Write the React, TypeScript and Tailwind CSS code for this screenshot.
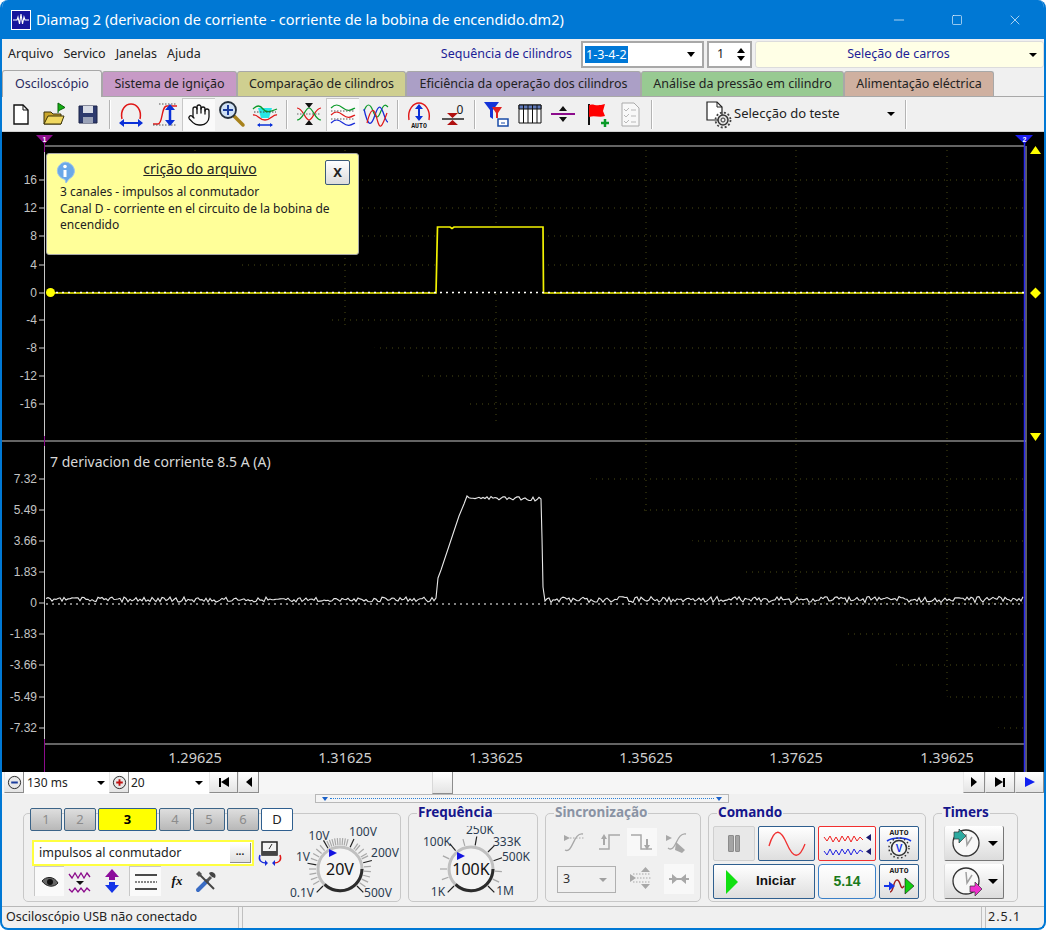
import type { ReactNode } from "react";
import { Hand, Minus, Square, X } from "lucide-react";

const tabs = [
  { label: "Sistema de ignição", w: "w-[135px]", bg: "bg-[#c79ac6]" },
  { label: "Comparação de cilindros", w: "w-[169px]", bg: "bg-[#cfcf90]" },
  { label: "Eficiência da operação dos cilindros", w: "w-[235px]", bg: "bg-[#ab9fc6]" },
  { label: "Análise da pressão em cilindro", w: "w-[203px]", bg: "bg-[#98ca92]" },
  { label: "Alimentação eléctrica", w: "w-[150px]", bg: "bg-[#cfb0a0]" },
];

const xTicks = [
  { x: 195, label: "1.29625" },
  { x: 345, label: "1.31625" },
  { x: 496, label: "1.33625" },
  { x: 646, label: "1.35625" },
  { x: 796, label: "1.37625" },
  { x: 947, label: "1.39625" },
];
const topY = [
  { y: 180, label: "16" },
  { y: 208, label: "12" },
  { y: 236, label: "8" },
  { y: 265, label: "4" },
  { y: 293, label: "0" },
  { y: 320, label: "-4" },
  { y: 348, label: "-8" },
  { y: 376, label: "-12" },
  { y: 404, label: "-16" },
];
const bottomY = [
  { y: 479, label: "7.32" },
  { y: 510, label: "5.49" },
  { y: 541, label: "3.66" },
  { y: 572, label: "1.83" },
  { y: 603, label: "0" },
  { y: 634, label: "-1.83" },
  { y: 665, label: "-3.66" },
  { y: 697, label: "-5.49" },
  { y: 728, label: "-7.32" },
];

// deterministic noise for the current trace
function noise(i: number) {
  const v = Math.sin(i * 12.9898) * 43758.5453;
  return v - Math.floor(v) - 0.5;
}

function currentTrace() {
  const pts: string[] = [];
  for (let x = 46; x < 436; x += 2) pts.push(`${x},${(599.5 + noise(x) * 5).toFixed(1)}`);
  pts.push("436,598", "438,578", "441,570", "447,552", "453,534", "459,516", "464,504", "467,496");
  for (let x = 469; x < 541; x += 2) pts.push(`${x},${(497 + (x - 469) * 0.03 + noise(x) * 4).toFixed(1)}`);
  pts.push("541,499", "542,538", "543,587", "545,601");
  for (let x = 547; x < 1024; x += 2) pts.push(`${x},${(599.5 + noise(x) * 6).toFixed(1)}`);
  return pts.join(" ");
}

function Ic({ size = 30, view = "0 0 30 30", children }: { size?: number; view?: string; children: ReactNode }) {
  return (
    <svg width={size} height={size} viewBox={view} fill="none" className="block shrink-0">
      {children}
    </svg>
  );
}

const Sep = () => <div className="w-[2px] h-[29px] mx-[4px] border-l border-[#b4b4b4] bg-white shrink-0" />;

function TB({ pressed, children }: { pressed?: boolean; children: ReactNode }) {
  return (
    <div
      className={`w-[33.5px] h-[33px] flex items-center justify-center shrink-0 ${
        pressed ? "bg-[#fafafa] border-t border-l border-[#c8c8c8]" : ""
      }`}
    >
      {children}
    </div>
  );
}

const Caret = ({ className = "" }: { className?: string }) => (
  <span className={`w-0 h-0 border-x-[4px] border-x-transparent border-t-[4px] border-t-black ${className}`} />
);

function Toolbar() {
  return (
    <div className="h-[35px] flex items-center pl-[2px] bg-[#f0f0f0] border-b border-[#d0d0d0]">
      <TB>
        <Ic>
          <path d="M8 6h9l5 5v14H8z" fill="#fff" stroke="#111" strokeWidth="1.4" />
          <path d="M17 6v5h5" stroke="#111" />
        </Ic>
      </TB>
      <TB>
        <Ic>
          <path d="M5 25V13h7l2 2h8v10z" fill="#c9a52c" stroke="#3a3208" />
          <path d="M5 25l4-8h16l-3 8z" fill="#f0d860" stroke="#3a3208" />
          <path d="M19 14V4l7 4.500-6 3" fill="#14b014" stroke="#0a600a" />
        </Ic>
      </TB>
      <TB>
        <Ic>
          <path d="M6 7h18v17H6z" fill="#2d3a6e" stroke="#1c2448" />
          <path d="M10 7h10v7H10z" fill="#d8dce6" />
          <path d="M10 18h10v6H10z" fill="#9aa2b8" />
        </Ic>
      </TB>
      <Sep />
      <TB>
        <Ic>
          <path d="M6 20C4 10 10 5 15 5s11 5 9 15" stroke="#e01818" strokeWidth="1.5" />
          <path d="M5 24h20" stroke="#0a30d8" strokeWidth="2" />
          <path d="M3 24l5-4v8zM27 24l-5-4v8z" fill="#0a30d8" />
        </Ic>
      </TB>
      <TB>
        <Ic>
          <path d="M3 25h5c5 0 3-18 9-18h10" stroke="#e01818" strokeWidth="1.4" />
          <path d="M9 5h18M3 26h24" stroke="#555" strokeDasharray="1.500 1.500" />
          <path d="M20 9v14" stroke="#0a30d8" strokeWidth="2.500" />
          <path d="M20 5l5 6H15zM20 27l5-6H15z" fill="#0a30d8" />
        </Ic>
      </TB>
      <TB pressed>
        <Hand size={24} strokeWidth={1.3} color="#111" />
      </TB>
      <TB>
        <Ic>
          <path d="M17 17l9 9" stroke="#a8821c" strokeWidth="3.500" strokeLinecap="round" />
          <circle cx="11" cy="11" r="8" fill="#cfe0f4" stroke="#26303c" strokeWidth="1.8" />
          <path d="M11 6v10M6 11h10" stroke="#1a3c9c" strokeWidth="2" />
        </Ic>
      </TB>
      <TB>
        <Ic>
          <path d="M8 9h14l-3 10h-8z" fill="#29e6e6" />
          <path d="M3 10c4-4 7-4 10 0s7 3 14 0" stroke="#0a9a28" strokeWidth="1.3" />
          <path d="M3 16c5-1 6 5 12 5s8-6 12-5" stroke="#e01818" strokeWidth="1.3" />
          <path d="M4 13h22" stroke="#444" strokeDasharray="1.500 1.500" />
          <path d="M8 26h14" stroke="#0a30d8" strokeWidth="1.5" />
          <path d="M7 26l3-2v4zM23 26l-3-2v4z" fill="#0a30d8" />
        </Ic>
      </TB>
      <Sep />
      <TB>
        <Ic>
          <path d="M3 9c6 0 8 12 12 12s6-12 12-12" stroke="#e01818" strokeWidth="1.2" />
          <path d="M3 21c6 0 8-12 12-12s6 12 12 12" stroke="#0a9a28" strokeWidth="1.2" />
          <path d="M3 15h24" stroke="#666" strokeDasharray="1.500 1.500" />
          <path d="M11 4h8l-4 5zM11 26h8l-4-5z" fill="#111" />
        </Ic>
      </TB>
      <TB pressed>
        <Ic>
          <path d="M3 8c4-4 7-4 12 0s8 2 12 0" stroke="#0a9a28" strokeWidth="1.2" />
          <path d="M3 15c4-4 7-4 12 0s8 2 12 0" stroke="#e01818" strokeWidth="1.2" />
          <path d="M3 23c4-4 7-4 12 0s8 2 12 0" stroke="#1a2cd8" strokeWidth="1.2" />
          <path d="M3 11h24M3 19h24" stroke="#555" strokeDasharray="1.500 1.500" />
        </Ic>
      </TB>
      <TB>
        <Ic>
          <path d="M3 12c3-8 6-8 9 0s5 8 8 0 5-6 7-4" stroke="#0a9a28" strokeWidth="1.200" />
          <path d="M3 10c4 18 7 18 11 6s6-8 8-3 3 10 5 10" stroke="#1a2cd8" strokeWidth="1.300" />
          <path d="M6 24c4-16 7-16 10-4s5 8 10-6" stroke="#e01818" strokeWidth="1.200" />
        </Ic>
      </TB>
      <Sep />
      <TB>
        <Ic>
          <path d="M5 21C3 10 10 4 15 4s12 6 10 17" stroke="#e01818" strokeWidth="1.400" />
          <path d="M15 8v11" stroke="#0a30d8" strokeWidth="2" />
          <path d="M15 5l4 5h-8zM15 22l4-5h-8z" fill="#0a30d8" />
          <text x="15" y="28.500" textAnchor="middle" fontSize="6.500" fontWeight="700" fill="#111" fontFamily="Liberation Mono, monospace">AUTO</text>
        </Ic>
      </TB>
      <TB>
        <Ic>
          <path d="M9 14h11l-5.500 5zM9 26h11l-5.500-5z" fill="#b01010" />
          <path d="M4 20h22" stroke="#222" strokeWidth="1.500" />
          <text x="22" y="15" textAnchor="middle" fontSize="12" fill="#222" fontFamily="Noto Sans, sans-serif">0</text>
        </Ic>
      </TB>
      <Sep />
      <TB>
        <Ic>
          <path d="M3 3h15l-6 8v9l-3-2v-7z" fill="#1434d8" />
          <path d="M11 8h10l-4 6v5h-2v-5z" fill="#e02020" />
          <path d="M17 20h10v7H17z" fill="#fff" stroke="#1a4ca8" strokeWidth="1.500" />
          <path d="M20 24h4" stroke="#1a4ca8" />
        </Ic>
      </TB>
      <TB>
        <Ic>
          <path d="M4 6h22v18H4z" fill="#fff" stroke="#111" />
          <path d="M4 6h22v4H4z" fill="#5f78b8" stroke="#111" />
          <path d="M8.500 6v18M13 6v18M17.500 6v18M22 6v18" stroke="#111" />
        </Ic>
      </TB>
      <TB>
        <Ic>
          <path d="M3 15h24" stroke="#8c0c8c" strokeWidth="2" />
          <path d="M15 7l4 5h-8zM15 23l4-5h-8z" fill="#111" />
        </Ic>
      </TB>
      <TB>
        <Ic>
          <path d="M7 5v21" stroke="#111" strokeWidth="2" />
          <path d="M7 6c5-2 6 2 16-1l-2 7 2 5c-6 2-10-1-16 1z" fill="#f00" />
          <path d="M19 24h8M23 20v8" stroke="#0a9a28" strokeWidth="2.500" />
        </Ic>
      </TB>
      <TB>
        <Ic>
          <path d="M7 4h12l5 5v18H7z" fill="#f8f8f8" stroke="#aaa" />
          <path d="M9 10l2 2 3-3M9 16l2 2 3-3M9 22l2 2 3-3M16 11h5M16 17h5M16 23h5" stroke="#b8b8b8" />
        </Ic>
      </TB>
      <Sep />
      <div className="w-[198px] ml-[46px] flex items-center shrink-0">
        <Ic size={30}>
          <path d="M4 3h10l5 5v13H4z" fill="#fff" stroke="#222" strokeWidth="1.200" />
          <path d="M14 3v5h5" stroke="#222" />
          <circle cx="20" cy="21" r="5" fill="#ddd" stroke="#333" strokeWidth="1.500" />
          <circle cx="20" cy="21" r="7.500" stroke="#444" strokeWidth="1.800" strokeDasharray="2 2" />
          <circle cx="20" cy="21" r="2" fill="#f0f0f0" stroke="#333" />
        </Ic>
        <span className="ml-[1px] text-[13px] text-[#222]">Selecção do teste</span>
        <Caret className="ml-auto mr-[6px]" />
      </div>
      <Sep />
    </div>
  );
}

function Scope() {
  const vx = xTicks.map((t) => t.x);
  return (
    <div className="relative h-[640px] bg-black">
      <svg viewBox="2 132 1042 640" width={1042} height={640} className="block">
        {[...topY, ...bottomY].map((t) => (
          <g key={t.y}>
            <path d={`M50 ${t.y}H1024`} stroke="#4a4a14" strokeDasharray="1 5" />
            <path d={`M39 ${t.y}H44`} stroke="#d0d0d0" />
            <text x="37" y={t.y + 4} textAnchor="end" fontSize="12" fill="#c4c4c4" fontFamily="Liberation Sans, sans-serif">
              {t.label}
            </text>
          </g>
        ))}
        {vx.map((x) => (
          <path key={x} d={`M${x} 150V740`} stroke="#4a4a14" strokeDasharray="1 5" />
        ))}
        {xTicks.map((t) => (
          <text key={t.x} x={t.x} y="763" textAnchor="middle" fontSize="14.500" fill="#cfcfcf" fontFamily="Noto Sans, sans-serif">
            {t.label}
          </text>
        ))}

        <path d="M44.500 146H1025M44.500 146V744H1025M2 441H1026" stroke="#c8c8c8" />
        <path d="M44.500 136V152M44.500 436V446M44.500 739V772" stroke="#8c0c8c" />
        <path d="M36 135H53L44.500 144z" fill="#8c0c8c" />
        <text x="44.500" y="142" textAnchor="middle" fontSize="7" fontWeight="700" fill="#fff" fontFamily="Liberation Sans, sans-serif">1</text>
        <path d="M1026 146V772" stroke="#bdbdbd" />
        <path d="M1024.500 140V772" stroke="#2a2af0" strokeWidth="1.500" />
        <path d="M1015 135H1033L1024.500 144z" fill="#1c1cf0" />
        <text x="1024.500" y="142" textAnchor="middle" fontSize="7" fontWeight="700" fill="#fff" fontFamily="Liberation Sans, sans-serif">2</text>

        <path d="M1030 154L1035.500 146L1041 154zM1030 433L1035.500 441L1041 433zM1030 293L1035.500 287.500L1041 293L1035.500 298.500z" fill="#ffff00" />

        <path
          d="M50 293H436L437.500 227H450L452 228.500L454 227H543L543.500 293H1024"
          stroke="#f2f200"
          strokeWidth="1.700"
        />
        <path d="M50 292.500H1024" stroke="#fff" strokeWidth="1.500" strokeDasharray="2 4" />
        <circle cx="50.500" cy="292.500" r="4.500" fill="#ffff00" />

        <path d="M46 604H1024" stroke="#fff" strokeDasharray="2 4" strokeWidth="1.200" />
        <polyline points={currentTrace()} stroke="#e8e8e8" fill="none" strokeWidth="1.100" />

        <text x="50" y="467" fontSize="14" fill="#d8d8d8" fontFamily="Noto Sans, sans-serif">
          7 derivacion de corriente 8.5 A (A)
        </text>
      </svg>

      {/* nota do arquivo */}
      <div className="absolute left-[44px] top-[21px] w-[313px] h-[102px] rounded-[3px] bg-[#ffff99] border border-[#a8a8a8] text-[12px] leading-[16.500px] text-[#222]">
        <div className="absolute left-[6px] top-[6px]">
          <Ic size={24} view="0 0 24 24">
            <path d="M12 2a10 9 0 0 1 4 17l-3 4-1-3.500A10 9 0 0 1 12 2z" fill="#6aa8e8" stroke="#9cc4ec" />
            <circle cx="12" cy="6.500" r="1.800" fill="#fff" />
            <path d="M12 10v7" stroke="#fff" strokeWidth="3" />
          </Ic>
        </div>
        <p className="mt-[5px] text-center text-[14px] leading-[19px] underline pr-[5px]">crição do arquivo</p>
        <button className="absolute right-[8px] top-[6px] w-[25px] h-[25px] border border-[#3c5a78] rounded-[2px] bg-gradient-to-b from-white to-[#dcdcdc] font-bold text-[13px]">
          X
        </button>
        <p className="mt-[6px] ml-[13px] w-[280px]">
          3 canales - impulsos al conmutador
          <br />
          Canal D - corriente en el circuito de la bobina de encendido
        </p>
      </div>
    </div>
  );
}

function NavBtn({ w, children }: { w: string; children: ReactNode }) {
  return (
    <div className={`${w} h-[21px] shrink-0 flex items-center justify-center bg-gradient-to-b from-white to-[#e4e4e4] border-r border-b border-[#8c8c8c] border-l border-l-[#e8e8e8]`}>
      {children}
    </div>
  );
}

function NavRow() {
  return (
    <div className="h-[22px] flex items-stretch bg-[#f6f6f6] pl-[2px]">
      <NavBtn w="w-[20px]">
        <Ic size={15} view="0 0 16 16">
          <circle cx="8" cy="8" r="6.500" fill="#e8e8e8" stroke="#222" />
          <path d="M4.500 8h7" stroke="#1a3c9c" strokeWidth="2" />
        </Ic>
      </NavBtn>
      <div className="w-[85px] bg-white flex items-center pl-[3px] pr-[4px] text-[12px] text-[#222] shrink-0">
        130 ms
        <Caret className="ml-auto" />
      </div>
      <NavBtn w="w-[20px]">
        <Ic size={15} view="0 0 16 16">
          <circle cx="8" cy="8" r="6.500" fill="#e8e8e8" stroke="#222" />
          <path d="M4.500 8h7M8 4.500v7" stroke="#c01010" strokeWidth="2" />
        </Ic>
      </NavBtn>
      <div className="w-[80px] bg-white flex items-center pl-[2px] pr-[6px] text-[12px] text-[#222] shrink-0">
        20
        <Caret className="ml-auto" />
      </div>
      <NavBtn w="w-[29px]">
        <span className="w-[2px] h-[9px] bg-black" />
        <span className="w-0 h-0 border-y-[5px] border-y-transparent border-r-[8px] border-r-black" />
      </NavBtn>
      <NavBtn w="w-[21px]">
        <span className="w-0 h-0 border-y-[5px] border-y-transparent border-r-[6px] border-r-black" />
      </NavBtn>
      <div className="relative flex-1">
        <div className="absolute left-[173px] top-0 w-[21px] h-[22px] bg-gradient-to-b from-white to-[#e4e4e4] border-r border-b border-[#8c8c8c] border-l border-l-[#d8d8d8]" />
      </div>
      <NavBtn w="w-[22px]">
        <span className="w-0 h-0 border-y-[5px] border-y-transparent border-l-[6px] border-l-black" />
      </NavBtn>
      <NavBtn w="w-[30px]">
        <span className="w-0 h-0 border-y-[5px] border-y-transparent border-l-[8px] border-l-black" />
        <span className="w-[2px] h-[9px] bg-black" />
      </NavBtn>
      <NavBtn w="w-[29px]">
        <span className="w-0 h-0 border-y-[5.500px] border-y-transparent border-l-[10px] border-l-[#1020f0]" />
      </NavBtn>
    </div>
  );
}

function Group({ title, muted, w, children }: { title?: string; muted?: boolean; w: string; children: ReactNode }) {
  return (
    <div className={`relative ${w} h-[89px] shrink-0 rounded-[5px] border border-[#c8c8c8]`}>
      {title && (
        <span className={`absolute left-[8px] -top-[11px] px-[1px] bg-[#f0f0f0] text-[13.500px] leading-[18px] font-bold ${muted ? "text-[#8a93a4]" : "text-[#16168c]"}`}>
          {title}
        </span>
      )}
      {children}
    </div>
  );
}

function Knob({ view, cx, cy, r, value, labels, majors, minors, pointer }: {
  view: [number, number, number, number];
  cx: number;
  cy: number;
  r: number;
  value: string;
  labels: { x: number; y: number; t: string }[];
  majors: number[];
  minors: number[];
  pointer: [number, number];
}) {
  const tick = (a: number, r1: number, r2: number) => {
    const rad = (a * Math.PI) / 180;
    return `M${cx + Math.cos(rad) * r1} ${cy + Math.sin(rad) * r1}L${cx + Math.cos(rad) * r2} ${cy + Math.sin(rad) * r2}`;
  };
  return (
    <svg viewBox={view.join(" ")} width={view[2]} height={view[3]} className="block shrink-0">
      {minors.map((a) => (
        <path key={a} d={tick(a, r + 2, r + 9)} stroke="#a8a8a8" strokeWidth="1.200" />
      ))}
      {majors.map((a) => (
        <path key={a} d={tick(a, r + 2, r + 11)} stroke="#222" strokeWidth="1.200" />
      ))}
      <circle cx={cx} cy={cy} r={r} fill="#f4f4f4" stroke="#c0c0c0" strokeWidth="3" />
      <path
        d={`M${cx + r} ${cy}A${r} ${r} 0 0 1 ${cx - r * 0.7} ${cy + r * 0.7}`}
        fill="none"
        stroke="#2c2c2c"
        strokeWidth="3"
      />
      <path d={`M${pointer[0] - 4} ${pointer[1] - 4}l8 4l-8 4z`} fill="#1414e0" />
      <text x={cx} y={cy + 6} textAnchor="middle" fontSize="16" fill="#111" fontFamily="Noto Sans, sans-serif">
        {value}
      </text>
      {labels.map((l) => (
        <text key={l.t} x={l.x} y={l.y + 4} textAnchor="middle" fontSize="12" fill="#2c3c50" fontFamily="Noto Sans, sans-serif">
          {l.t}
        </text>
      ))}
    </svg>
  );
}

const ch = ["1", "2", "3", "4", "5", "6", "D"];

function ChannelGroup() {
  return (
    <Group w="w-[378px]">
      <div className="absolute -top-[6px] left-[6px] flex gap-[2px]">
        {ch.map((c) => (
          <div
            key={c}
            className={`h-[23px] flex items-center justify-center rounded-[2px] border text-[13px] ${
              c === "3"
                ? "w-[59px] border-[#2f5f8f] bg-[#ffff00] font-bold text-black"
                : c === "D"
                  ? "w-[32px] border-[#2f5f8f] bg-white text-[#222]"
                  : "w-[32px] border-[#3c6488] bg-gradient-to-b from-[#dedede] to-[#b8b8b8] text-[#8c8c8c]"
            }`}
          >
            {c}
          </div>
        ))}
      </div>
      <div className="absolute left-[8px] top-[26px] w-[222px] h-[26px] flex items-center border-2 border-[#ffff40] bg-white text-[12.500px] text-[#222] pl-[5px] pr-[1px]">
        impulsos al conmutador
        <div className="ml-auto w-[21px] h-[20px] flex items-center justify-center bg-gradient-to-b from-white to-[#e0e0e0] border-r border-b border-[#8c8c8c] text-[10px] font-bold leading-none pb-[3px]">
          ...
        </div>
      </div>
      <div className="absolute left-[233px] top-[26px]">
        <Ic size={26} view="0 0 26 26">
          <path d="M5 2h15v13H5z" fill="#f4f4f4" stroke="#222" strokeWidth="1.500" />
          <path d="M5 11h15v4H5z" fill="#444" />
          <path d="M12 9l3-5" stroke="#333" />
          <path d="M3 15c-2 5 1 8 6 8" stroke="#1a2cd8" strokeWidth="1.500" />
          <path d="M23 15c2 5-1 8-6 8" stroke="#e01818" strokeWidth="1.500" />
          <path d="M8 20v6l3-3zM18 20v6l-3-3z" fill="#1a2cd8" />
        </Ic>
      </div>
      <div className="absolute left-[10px] top-[52px] flex items-center">
        <div className="w-[30px] h-[30px] flex items-center justify-center bg-[#fafafa] border-t border-l border-[#c8c8c8]">
          <Ic size={20} view="0 0 20 20">
            <path d="M2 9c4-5 12-5 16 2-4 5-12 4-16-2z" fill="#666" stroke="#222" />
            <circle cx="10" cy="10" r="3" fill="#111" />
          </Ic>
        </div>
        <div className="w-[32px] ml-[-0px] flex justify-center">
          <Ic size={26} view="0 0 26 26">
            <path d="M2 6l3 4 3-5 3 5 3-5 3 5 3-5 3 4" stroke="#8c0c8c" strokeWidth="1.300" />
            <path d="M9 13h8l-4 4z" fill="#111" />
            <path d="M2 21l3 3 3-4 3 4 3-4 3 4 3-4 3 3" stroke="#8c0c8c" strokeWidth="1.300" />
          </Ic>
        </div>
        <div className="w-[32px] flex justify-center">
          <Ic size={26} view="0 0 26 26">
            <path d="M13 1l7 8h-4v3h-6V9H6z" fill="#8c0c9c" />
            <path d="M13 25l7-8h-4v-3h-6v3H6z" fill="#1434e8" />
          </Ic>
        </div>
        <div className="ml-[1px] w-[32px] h-[30px] flex items-center justify-center bg-[#fafafa] border-t border-l border-[#c8c8c8]">
          <Ic size={24} view="0 0 24 24">
            <path d="M1 5h22M1 19h22" stroke="#111" strokeWidth="1.500" />
            <path d="M1 12h22" stroke="#111" strokeDasharray="2 1" />
          </Ic>
        </div>
        <span className="w-[32px] text-center text-[13px] font-bold italic text-[#111] font-['Liberation_Serif',serif]">fx</span>
        <div className="ml-[-3px] w-[32px] flex justify-center">
          <Ic size={24} view="0 0 24 24">
            <path d="M4 21L13 12" stroke="#3a6cc4" strokeWidth="4" strokeLinecap="round" />
            <path d="M13 12L17 8" stroke="#555" strokeWidth="3" />
            <path d="M15 4a4 4 0 0 1 6 5l-3-1-2-2z" fill="#444" />
            <path d="M4 4l16 16" stroke="#444" strokeWidth="2" />
            <path d="M2 5l3-3 3 3-3 3z" fill="#555" />
          </Ic>
        </div>
      </div>
      <div className="absolute right-0 top-[12px]">
        <Knob
          view={[286, 826, 114, 76]}
          cx={340}
          cy={869}
          r={22}
          value="20V"
          pointer={[333, 853]}
          majors={[-65, -120, -170, 135, 45, -15]}
          minors={[-5, 5, 15, 25, 35, -30, -40, -50, -80, -90, -100, -110, -130, -140, -150, -160, 180, 170, 160, 150, -25, -55, -75, -85, -95, -105, -115]}
          labels={[
            { x: 319, y: 836, t: "10V" },
            { x: 363, y: 832, t: "100V" },
            { x: 303, y: 857, t: "1V" },
            { x: 385, y: 853, t: "200V" },
            { x: 302, y: 893, t: "0.1V" },
            { x: 378, y: 893, t: "500V" },
          ]}
        />
      </div>
    </Group>
  );
}

function FreqGroup() {
  return (
    <Group title="Frequência" w="w-[130px]">
      <div className="absolute left-0 top-[12px]">
        <Knob
          view={[408, 826, 130, 76]}
          cx={470}
          cy={869}
          r={22}
          value="100K"
          pointer={[460, 856]}
          majors={[-130, -80, -45, -20, 135, 45]}
          minors={[-105, -155, -180, 160, 5, 25]}
          labels={[
            { x: 479, y: 830, t: "250K" },
            { x: 436, y: 842, t: "100K" },
            { x: 506, y: 842, t: "333K" },
            { x: 515, y: 857, t: "500K" },
            { x: 437, y: 892, t: "1K" },
            { x: 504, y: 891, t: "1M" },
          ]}
        />
      </div>
    </Group>
  );
}

const grey = "#a8a8a8";

function SyncGroup() {
  return (
    <Group title="Sincronização" muted w="w-[156px]">
      <div className="absolute left-[11px] top-[14px] flex items-center">
        <div className="w-[35px] flex justify-center">
          <Ic size={28} view="0 0 28 28">
            <path d="M3 7l6 3-6 3z" fill={grey} />
            <path d="M4 22c8 4 8-18 18-16" stroke={grey} strokeWidth="1.300" />
            <path d="M9 10h14" stroke={grey} strokeDasharray="1.500 1.500" />
          </Ic>
        </div>
        <div className="w-[35px] flex justify-center">
          <Ic size={28} view="0 0 28 28">
            <path d="M3 21h10V7h11" stroke={grey} strokeWidth="1.500" />
            <path d="M8 6l3 5H5zM7 11h2v6H7z" fill={grey} />
          </Ic>
        </div>
        <div className="w-[30px] h-[28px] bg-[#f8f8f8] flex justify-center">
          <Ic size={28} view="0 0 28 28">
            <path d="M3 7h10v14h11" stroke={grey} strokeWidth="1.500" />
            <path d="M19 22l3-5h-6zM18 11h2v6h-2z" fill={grey} />
          </Ic>
        </div>
        <div className="w-[40px] flex justify-center">
          <Ic size={28} view="0 0 28 28">
            <path d="M3 7l6 3-6 3z" fill={grey} />
            <path d="M5 20c8 6 8-16 18-14" stroke={grey} strokeWidth="1.300" />
            <path d="M13 14l9 8-3 3-7-3z" fill={grey} />
          </Ic>
        </div>
      </div>
      <div className="absolute left-[11px] top-[52px] w-[59px] h-[27px] border border-[#b0b0b0] flex items-center pl-[5px] pr-[8px] text-[12.500px] text-[#333]">
        3
        <span className="ml-auto w-0 h-0 border-x-[4px] border-x-transparent border-t-[4px] border-t-[#a0a0a0]" />
      </div>
      <div className="absolute left-[80px] top-[50px] w-[30px] flex justify-center">
        <Ic size={28} view="0 0 28 28">
          <path d="M3 10l6 4-6 4z" fill={grey} />
          <path d="M10 14h15M6 10h18M6 18h18" stroke={grey} strokeDasharray="1.500 1.500" />
          <path d="M14 8h9l-4.500-5zM14 20h9l-4.500 5z" transform="matrix(1 0 0 -1 0 28)" fill={grey} />
        </Ic>
      </div>
      <div className="absolute left-[118px] top-[50px] w-[30px] h-[30px] bg-[#f8f8f8] flex items-center justify-center">
        <Ic size={26} view="0 0 26 26">
          <path d="M3 13h20" stroke={grey} strokeWidth="2" />
          <path d="M12 13L6 8v10zM14 13l6-5v10z" fill={grey} />
        </Ic>
      </div>
    </Group>
  );
}

const cmdBtn = "flex items-center justify-center rounded-[2px] border border-[#2f5f8f] bg-gradient-to-b from-white to-[#dedede]";

function CommandGroup() {
  return (
    <Group title="Comando" w="w-[218px]">
      <div className="absolute left-[4px] top-[12px] grid grid-cols-[42px_57px_58px_40px] grid-rows-[35px_35px] gap-x-[3px] gap-y-[3px]">
        <div className="flex items-center justify-center gap-[1px] rounded-[2px] border border-[#d0d0d0] bg-[#e8e8e8]">
          <span className="w-[5.500px] h-[17px] rounded-[1px] bg-[#a4a4a4] border border-[#8c8c8c]" />
          <span className="w-[5.500px] h-[17px] rounded-[1px] bg-[#a4a4a4] border border-[#8c8c8c]" />
        </div>
        <div className={cmdBtn}>
          <Ic size={40} view="0 0 40 40">
            <path d="M2 22C8 2 14 6 20 20s12 16 18 0" stroke="#f03030" strokeWidth="1.300" />
          </Ic>
        </div>
        <div className="flex flex-col items-center justify-center rounded-[2px] border border-[#f03030] bg-gradient-to-b from-white to-[#e8e8e8]">
          <svg viewBox="0 0 48 28" width={48} height={28} fill="none" className="block">
            <path d="M1 7l3 4 3-5 3 6 3-5 3 5 3-6 3 5 3-5 3 6 3-6 3 5 3-4 3 3" stroke="#f02020" />
            <path d="M1 21l3 4 3-6 3 6 3-5 3 5 3-6 3 5 3-5 3 6 3-6 3 5 3-4 3 2" stroke="#2020e0" />
            <path d="M48 4v7l-5-3.500zM48 18v7l-5-3.500z" fill="#1a1a70" />
          </svg>
        </div>
        <div className={cmdBtn}>
          <Ic size={34} view="0 0 34 34">
            <text x="17" y="8" textAnchor="middle" fontSize="8" fontWeight="700" fill="#222" fontFamily="Liberation Mono, monospace">AUTO</text>
            <path d="M5 14c6-4 18-4 24 0" stroke="#1434e8" strokeWidth="1.600" />
            <circle cx="17" cy="21" r="7.500" fill="#f4f4f4" stroke="#333" strokeWidth="1.600" />
            <circle cx="17" cy="21" r="10" stroke="#333" strokeWidth="1.500" strokeDasharray="1.500 2.500" />
            <text x="17" y="25" textAnchor="middle" fontSize="10" fontWeight="700" fill="#1434e8" fontFamily="Liberation Sans, sans-serif">V</text>
          </Ic>
        </div>
        <div className={`${cmdBtn} col-span-2 !justify-start pl-[12px] gap-[18px] text-[13.500px] font-bold text-[#111] font-['Liberation_Sans',sans-serif]`}>
          <span className="w-0 h-0 border-y-[12px] border-y-transparent border-l-[12px] border-l-[#10e010]" />
          Iniciar
        </div>
        <div className="flex items-center justify-center rounded-[4px] border border-[#3a80c8] bg-gradient-to-b from-white to-[#ececec] text-[14px] font-bold text-[#1a7a1a] font-['Liberation_Sans',sans-serif]">
          5.14
        </div>
        <div className={cmdBtn}>
          <Ic size={34} view="0 0 34 34">
            <text x="17" y="8" textAnchor="middle" fontSize="8" fontWeight="700" fill="#222" fontFamily="Liberation Mono, monospace">AUTO</text>
            <path d="M8 27c4 0 3-12 7-12s3 12 7 6" stroke="#9c1c1c" strokeWidth="1.400" />
            <path d="M2 21h8" stroke="#1434e8" strokeWidth="2" />
            <path d="M13 21l-6-4.500v9z" fill="#1434e8" />
            <path d="M23 13l9 8-9 8z" fill="#10d010" stroke="#111" strokeWidth="0.600" />
          </Ic>
        </div>
      </div>
    </Group>
  );
}

function TimerBtn({ down }: { down?: boolean }) {
  return (
    <div className="w-[60px] h-[35px] flex items-center pl-[5px] gap-[6px] rounded-[2px] border-r border-b border-[#777] border-l border-l-[#ddd] bg-gradient-to-b from-white to-[#dcdcdc]">
      <Ic size={32} view="0 0 32 32">
        <circle cx="16" cy="16" r="13" fill="#f8f8f8" stroke="#333" strokeWidth="1.300" />
        <path d="M16 7l1 11 5-8" stroke="#a0a0a0" strokeWidth="1.500" />
        {down ? (
          <path d="M20 21h5v-4l7 7-7 7v-4h-5z" fill="#ee30cc" stroke="#333" strokeWidth="0.700" />
        ) : (
          <path d="M2 3h5V0l7 7-7 7v-4H2z" transform="translate(2 2)" fill="#2caaa0" stroke="#333" strokeWidth="0.700" />
        )}
      </Ic>
      <Caret className="!border-x-[5px] !border-t-[5px]" />
    </div>
  );
}

function TimersGroup() {
  return (
    <Group title="Timers" w="w-[85px]">
      <div className="absolute left-[10px] top-[12px] flex flex-col gap-[3px]">
        <TimerBtn />
        <TimerBtn down />
      </div>
    </Group>
  );
}

export default function App() {
  return (
    <div className="w-[1046px] h-[930px] bg-white font-['Noto_Sans',sans-serif]">
      <div className="w-full h-full rounded-[8px] overflow-hidden border-x-2 border-b-2 border-[#0078d4] bg-[#f0f0f0] flex flex-col">
        {/* title bar */}
        <div className="h-[39px] shrink-0 bg-[#0078d4] flex items-center text-white pl-[9px]">
          <div className="w-[20px] h-[20px] bg-[#16169c] border border-white flex items-center justify-center">
            <Ic size={16} view="0 0 16 16">
              <path d="M0 8h4l1-3 1.500 7L8 2l1.500 10L11 5l1 3h4" stroke="#fff" strokeWidth="1.100" />
            </Ic>
          </div>
          <span className="ml-[5px] text-[14.500px]">Diamag 2 (derivacion de corriente - corriente de la bobina de encendido.dm2)</span>
          <div className="ml-auto flex items-center">
            <div className="w-[58px] flex justify-center"><Minus size={16} strokeWidth={1} /></div>
            <div className="w-[58px] flex justify-center"><Square size={12} strokeWidth={1.200} /></div>
            <div className="w-[58px] flex justify-center"><X size={16} strokeWidth={1} /></div>
          </div>
        </div>

        {/* menu */}
        <div className="h-[31px] shrink-0 flex items-center text-[12.500px] text-[#222] pl-[6px]">
          <div className="flex gap-[10px]">
            <span>Arquivo</span>
            <span>Servico</span>
            <span>Janelas</span>
            <span>Ajuda</span>
          </div>
          <span className="ml-auto text-[#1e1e96] mr-[9px]">Sequência de cilindros</span>
          <div className="w-[123px] h-[27px] flex items-center border-2 border-[#a8a8a8] bg-white pl-[2px] pr-[7px] shrink-0">
            <span className="bg-[#0078d7] text-white leading-[17px] px-[1px]">1-3-4-2</span>
            <Caret className="ml-auto !border-x-[4.500px] !border-t-[5px]" />
          </div>
          <div className="ml-[3px] w-[45px] h-[27px] flex items-center border-2 border-[#a8a8a8] bg-white pl-[8px] pr-[5px] shrink-0">
            1
            <div className="ml-auto flex flex-col gap-[3px]">
              <span className="w-0 h-0 border-x-[4.500px] border-x-transparent border-b-[5px] border-b-black" />
              <Caret className="!border-x-[4.500px] !border-t-[5px]" />
            </div>
          </div>
          <div className="ml-[3px] w-[289px] h-[27px] flex items-center rounded-[3px] border border-[#dcdcdc] bg-[#ffffe6] text-[#1e1e96] shrink-0 pr-[6px]">
            <span className="flex-1 text-center pl-[12px]">Seleção de carros</span>
            <Caret />
          </div>
        </div>

        {/* tabs */}
        <div className="h-[27px] shrink-0 flex items-end text-[12.500px] text-[#222] border-b border-[#a8a8a8]">
          <div className="w-[100px] h-[27px] -mb-[1px] rounded-t-[3px] border border-b-0 border-[#a8a8a8] bg-[#f0f0f0] flex items-center justify-center text-[#2a2a60]">
            Osciloscópio
          </div>
          {tabs.map((t) => (
            <div
              key={t.label}
              className={`${t.w} ${t.bg} h-[25px] rounded-t-[3px] border border-b-0 border-[#a8a8a8] flex items-center justify-center shrink-0`}
            >
              {t.label}
            </div>
          ))}
        </div>

        <Toolbar />
        <Scope />
        <NavRow />

        {/* painel inferior */}
        <div className="h-[113px] shrink-0 bg-[#f0f0f0] border-b border-[#b8b8b8]">
          <div className="ml-[313px] w-[414px] h-[9px] flex items-center justify-between border border-[#b8b8b8] bg-[#f4f4f4] px-[6px] text-[#2a80d8]">
            <span className="w-0 h-0 border-x-[3px] border-x-transparent border-t-[4px] border-t-[#1a60c8]" />
            <span className="flex-1 mx-[2px] border-t border-dotted border-[#2a80d8]" />
            <span className="w-0 h-0 border-x-[3px] border-x-transparent border-t-[4px] border-t-[#1a60c8]" />
          </div>
          <div className="mt-[10px] ml-[21px] flex gap-[7px]">
            <ChannelGroup />
            <FreqGroup />
            <SyncGroup />
            <CommandGroup />
            <TimersGroup />
          </div>
        </div>

        {/* status */}
        <div className="flex-1 flex items-stretch text-[12.500px] text-[#222]">
          <div className="w-[237px] pl-[4px] flex items-center border-r border-[#c0c0c0]">Osciloscópio USB não conectado</div>
          <div className="ml-[3px] w-[740px] border-l border-r border-[#c0c0c0]" />
          <div className="ml-[3px] flex-1 pl-[2px] flex items-center border-l border-[#c0c0c0] tracking-[1px]">2.5.1</div>
        </div>
      </div>
    </div>
  );
}
